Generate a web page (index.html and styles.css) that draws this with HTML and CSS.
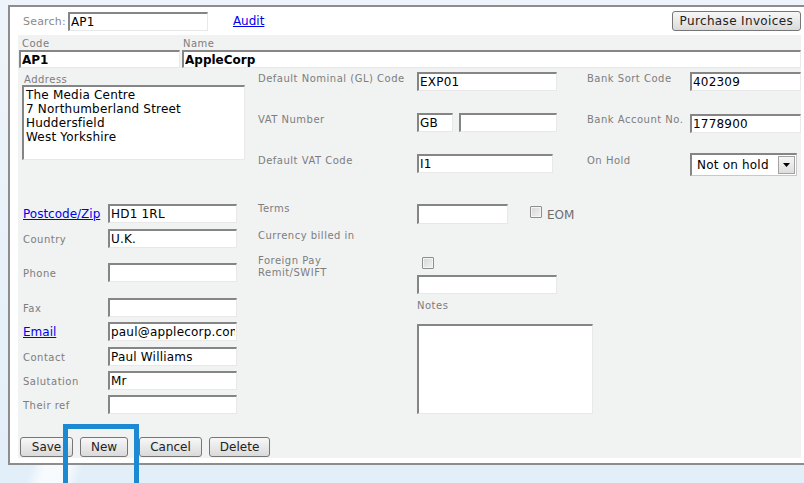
FILE: index.html
```html
<!DOCTYPE html>
<html lang="en">
<head>
<meta charset="utf-8">
<title>Supplier – AP1</title>
<link rel="stylesheet" href="styles.css">
</head>
<body>
<div class="frame">
  <div class="topbar">
    <span class="search-label">Search:</span>
    <input class="field search-input" type="text" value="AP1">
    <a href="#" class="link audit">Audit</a>
    <button type="button" class="btn invoices">Purchase Invoices</button>
  </div>

  <form class="sheet">
    <div class="idrow">
      <div class="idcell code">
        <label class="lbl">Code</label>
        <input class="field idfield" type="text" value="AP1">
      </div>
      <div class="idcell name">
        <label class="lbl">Name</label>
        <input class="field idfield" type="text" value="AppleCorp">
      </div>
    </div>

    <div class="main">
      <!-- address and contact details -->
      <div class="col left">
        <label class="lbl addr-lbl">Address</label>
        <textarea class="field addr">The Media Centre
7 Northumberland Street
Huddersfield
West Yorkshire</textarea>
        <div class="lrows">
          <div class="lrow"><a href="#" class="link">Postcode/Zip</a><input class="field" type="text" value="HD1 1RL"></div>
          <div class="lrow gap-s"><label class="lbl">Country</label><input class="field" type="text" value="U.K."></div>
          <div class="lrow gap"><label class="lbl">Phone</label><input class="field" type="text" value=""></div>
          <div class="lrow gap-l"><label class="lbl">Fax</label><input class="field" type="text" value=""></div>
          <div class="lrow"><a href="#" class="link">Email</a><input class="field" type="text" value="paul@applecorp.com"></div>
          <div class="lrow gap-s"><label class="lbl">Contact</label><input class="field" type="text" value="Paul Williams"></div>
          <div class="lrow"><label class="lbl">Salutation</label><input class="field" type="text" value="Mr"></div>
          <div class="lrow"><label class="lbl">Their ref</label><input class="field" type="text" value=""></div>
        </div>
      </div>

      <!-- accounting settings -->
      <div class="col mid">
        <div class="mrow r1">
          <label class="lbl">Default Nominal (GL) Code</label>
          <input class="field w140" type="text" value="EXP01">
        </div>
        <div class="mrow r2">
          <label class="lbl">VAT Number</label>
          <div class="vat">
            <input class="field vat-cc" type="text" value="GB">
            <input class="field vat-no" type="text" value="">
          </div>
        </div>
        <div class="mrow r3">
          <label class="lbl">Default VAT Code</label>
          <input class="field w136" type="text" value="I1">
        </div>
        <div class="mrow terms">
          <label class="lbl">Terms</label>
          <div class="terms-cell">
            <input class="field terms-in" type="text" value="">
            <input class="check eom-check" type="checkbox">
            <span class="eom">EOM</span>
          </div>
        </div>
        <div class="mrow currency">
          <label class="lbl">Currency billed in</label>
        </div>
        <div class="mrow foreign">
          <label class="lbl">Foreign Pay<br>Remit/SWIFT</label>
          <div class="stack">
            <input class="check fp-check" type="checkbox">
            <input class="field w140 swift" type="text" value="">
            <label class="lbl notes-lbl">Notes</label>
            <textarea class="field notes"></textarea>
          </div>
        </div>
      </div>

      <!-- bank details -->
      <div class="col right">
        <div class="rrow r1">
          <label class="lbl">Bank Sort Code</label>
          <input class="field" type="text" value="402309">
        </div>
        <div class="rrow r2">
          <label class="lbl">Bank Account No.</label>
          <input class="field" type="text" value="1778900">
        </div>
        <div class="rrow r3">
          <label class="lbl">On Hold</label>
          <div class="select">
            <span class="select-text">Not on hold</span>
            <span class="select-btn">
              <svg width="7" height="4" viewBox="0 0 7 4"><path d="M0 0h7L3.5 4z" fill="#000"/></svg>
            </span>
          </div>
        </div>
      </div>
    </div>

    <div class="actions">
      <button type="button" class="btn save">Save</button>
      <button type="button" class="btn">New</button>
      <button type="button" class="btn cancel">Cancel</button>
      <button type="button" class="btn">Delete</button>
    </div>
  </form>
</div>

<div class="highlight"></div>
</body>
</html>
```

FILE: styles.css
```css
* { box-sizing: border-box; }

html, body { margin: 0; }

body {
  position: relative;
  width: 804px;
  height: 483px;
  overflow: hidden;
  font-family: "DejaVu Sans", Verdana, sans-serif;
  background:
    linear-gradient(108deg, transparent 0 30px, rgba(255,255,255,0.75) 44px, rgba(255,255,255,0.75) 66px, transparent 80px) bottom left / 140px 20px no-repeat,
    linear-gradient(#eef4fa, #e2eef8);
}

/* outer window */
.frame {
  margin: 5px 0 0 8px;
  border: 2px solid #8d8d8d;
  border-right: 0;
  background: #fff;
  padding: 0 3px 5px 8px;
}

.topbar {
  height: 28px;
  display: flex;
  align-items: center;
  padding: 0 0 0 5px;
}

.search-label {
  font-size: 11px;
  letter-spacing: 0.2px;
  color: #8a8a8a;
  margin-right: 2px;
}

.field {
  font-family: "DejaVu Sans", Verdana, sans-serif;
  font-size: 12px;
  letter-spacing: 0.2px;
  color: #000;
  background: #fff;
  border-top: 2px solid #858585;
  border-left: 2px solid #858585;
  border-right: 1px solid #e8e8e8;
  border-bottom: 1px solid #e8e8e8;
  border-radius: 0;
  padding: 0 1px;
  margin: 0;
  height: 19px;
  outline: none;
}

.search-input { width: 140px; }

.link {
  font-size: 12px;
  color: #0000ee;
  text-decoration: underline;
}

.audit { margin-left: 25px; }

.btn {
  font-family: "DejaVu Sans", Verdana, sans-serif;
  font-size: 12px;
  color: #222;
  height: 20px;
  padding: 0 10px;
  margin: 0;
  border: 1px solid #767676;
  border-radius: 3px;
  background: linear-gradient(#f7f7f7, #e9e9e9 50%, #dadada);
  line-height: 16px;
}

.invoices {
  margin-left: auto;
  padding: 0 7px;
  letter-spacing: 0.35px;
}

/* grey form body */
.sheet {
  display: block;
  margin: 0;
  background: #f1f2f2;
  padding: 2px 0 1px;
}

.lbl {
  font-size: 10px;
  line-height: 12px;
  letter-spacing: 0.5px;
  color: #7d7d7d;
}

.idrow {
  display: flex;
  gap: 2px;
  padding-left: 1px;
}

.idcell { display: flex; flex-direction: column; }
.idcell .lbl { line-height: 13px; }
.idcell.code { width: 161px; }
.idcell.code .lbl { padding-left: 3px; }
.idcell.name { flex: 1; }
.idcell.name .lbl { padding-left: 1px; }

.idfield {
  width: 100%;
  height: 18px;
  font-weight: bold;
  letter-spacing: 0;
}

.main {
  display: flex;
  margin-top: 2px;
}

.col { display: flex; flex-direction: column; }

/* left column */
.left {
  width: 240px;
  padding-left: 4px;
}

.addr-lbl {
  padding-left: 2px;
  margin-top: 2px;
  padding-top: 2px;
  line-height: 11px;
}

.addr {
  display: block;
  width: 223px;
  height: 75px;
  margin-top: 0;
  padding: 1px 2px;
  line-height: 14px;
  resize: none;
  overflow: hidden;
}

.lrows {
  display: flex;
  flex-direction: column;
  margin-top: 44px;
}

.lrow {
  display: grid;
  grid-template-columns: 86px 129px;
  align-items: center;
  height: 19px;
}

.lrow + .lrow { margin-top: 5px; }
.lrow + .lrow.gap-s { margin-top: 6px; }
.lrow + .lrow.gap { margin-top: 15px; }
.lrow + .lrow.gap-l { margin-top: 16px; }

.lrow .lbl { padding: 3px 0 0 1px; }
.lrow .link { padding-left: 1px; }

.lrow .field { width: 129px; }

/* middle column */
.mid { width: 329px; }

.mrow {
  display: grid;
  grid-template-columns: 159px auto;
  align-items: start;
}

.mrow > .lbl,
.rrow > .lbl { padding-top: 1px; }

.mrow.r1 { margin-top: 2px; }
.mrow.r2 { margin-top: 22px; }
.mrow.r3 { margin-top: 22px; }
.mrow.terms { margin-top: 29px; }
.mrow.currency { margin-top: 5px; }
.mrow.foreign { margin-top: 12px; }

.w140 { width: 140px; }
.w136 { width: 136px; }

.vat { display: flex; gap: 6px; }
.vat-cc { width: 36px; }
.vat-no { width: 98px; }

.terms-cell {
  display: flex;
  align-items: center;
  margin-top: 2px;
}

.terms-in { width: 91px; height: 20px; }

.check {
  appearance: none;
  -webkit-appearance: none;
  width: 12px;
  height: 12px;
  margin: 0;
  border: 1px solid #8e8e8e;
  border-radius: 1px;
  background: linear-gradient(135deg, #d6d6d6, #f2f2f2);
  box-shadow: inset 0 0 0 1px #f4f4f4;
}

.eom-check { margin-left: 22px; margin-top: -4px; }

.eom {
  font-size: 12px;
  color: #6e6e6e;
  margin-left: 5px;
  margin-top: 1px;
}

.stack {
  display: flex;
  flex-direction: column;
  align-items: flex-start;
}

.fp-check { margin: 3px 0 0 5px; }
.swift { margin-top: 6px; }
.notes-lbl { margin-top: 5px; padding-top: 1px; }

.notes {
  display: block;
  width: 176px;
  height: 90px;
  margin-top: 12px;
  resize: none;
}

/* right column */
.right { flex: 1; }

.rrow {
  display: grid;
  grid-template-columns: 103px 1fr;
  align-items: start;
}

.rrow.r1 { margin-top: 2px; }
.rrow.r2 { margin-top: 22px; }
.rrow.r2 .field { margin-top: 1px; }
.rrow.r3 { margin-top: 20px; }
.rrow.r3 > .lbl { padding-top: 2px; }

.rrow .field { width: 100%; }

.select {
  width: 107px;
  height: 23px;
  display: flex;
  align-items: center;
  background: #fff;
  border-top: 2px solid #858585;
  border-left: 2px solid #858585;
  border-right: 1px solid #c8c8c8;
  border-bottom: 1px solid #c8c8c8;
}

.select-text {
  flex: 1;
  font-size: 12px;
  letter-spacing: 0.2px;
  color: #000;
  padding-left: 5px;
}

.select-btn {
  width: 17px;
  height: 18px;
  margin-right: 1px;
  display: flex;
  align-items: center;
  justify-content: center;
  border: 1px solid #a3a3a3;
  background: linear-gradient(#f6f6f6, #dedede);
}

.select-btn svg { display: block; }

/* buttons along the bottom */
.actions {
  display: flex;
  gap: 7px;
  margin-top: 23px;
  padding-left: 2px;
}

.save { min-width: 53px; }
.cancel { margin-left: 4px; }

/* callout box drawn over the form */
.highlight {
  position: absolute;
  left: 63px;
  top: 424px;
  width: 76px;
  height: 80px;
  border: 5px solid #1c89d3;
  border-bottom: 0;
}
```
